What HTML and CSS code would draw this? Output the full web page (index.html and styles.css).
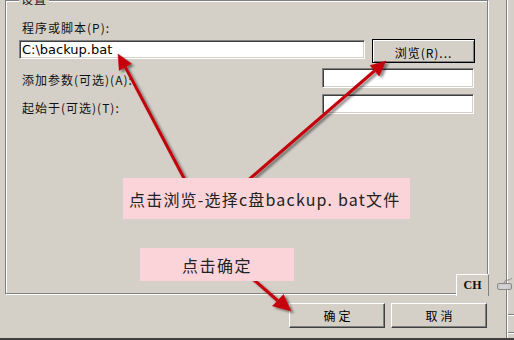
FILE: index.html
```html
<!DOCTYPE html>
<html lang="zh-CN">
<head>
<meta charset="utf-8">
<title>设置</title>
<link rel="stylesheet" href="styles.css">
</head>
<body>
<div class="window">
  <div class="main">
    <div class="group">
      <span class="group-title">设置</span>
      <div class="label first">程序或脚本(P):</div>
      <div class="row row-prog">
        <div class="field wide">C:\backup.bat</div>
        <div class="btn btn-default">浏览(R)...</div>
      </div>
      <div class="row row-opt r3">
        <div class="label">添加参数(可选)(A):</div>
        <div class="field narrow"></div>
      </div>
      <div class="row row-opt r4">
        <div class="label">起始于(可选)(T):</div>
        <div class="field narrow"></div>
      </div>
    </div>
    <div class="actions">
      <div class="btn btn-action">确定</div>
      <div class="btn btn-action">取消</div>
    </div>
  </div>
  <div class="side">
    <div class="side-line l1"></div>
    <div class="side-line l2"></div>
  </div>
</div>

<div class="langbar">CH</div>
<svg class="kbd" width="17" height="14" viewBox="0 0 17 14">
  <path d="M8 7 C8 4 10 3 12 3 C14 3 15 2 16 1" fill="none" stroke="#8c8c8c" stroke-width="1"/>
  <rect x="1.5" y="6.5" width="14" height="6" rx="1.5" fill="#c9c9c9" stroke="#8a8a8a"/>
  <path d="M3.5 9 h10 M4.5 11 h8" stroke="#f2f2f2" stroke-width="1" stroke-dasharray="1 1"/>
</svg>

<svg class="arrows" width="514" height="340" viewBox="0 0 514 340">
  <defs>
    <filter id="sh" x="-30%" y="-30%" width="160%" height="160%">
      <feDropShadow dx="2.5" dy="2" stdDeviation="1.3" flood-color="#000" flood-opacity="0.45"/>
    </filter>
  </defs>
  <g filter="url(#sh)" fill="#c4000a" stroke="#c4000a">
    <line x1="186" y1="182" x2="125.3" y2="67.1" stroke-width="3"/>
    <polygon points="118,54 131.4,63.7 119.2,70.5" stroke-width="0.5"/>
    <line x1="246" y1="182" x2="374.6" y2="70.75" stroke-width="3"/>
    <polygon points="386,61 379.15,76.07 370.05,65.43" stroke-width="0.5"/>
    <line x1="245" y1="272" x2="277.5" y2="300.5" stroke-width="3"/>
    <polygon points="291,311 283.5,294.5 272.5,306" stroke-width="0.5"/>
  </g>
</svg>

<div class="callout c1">点击浏览-选择c盘backup. bat文件</div>
<div class="callout c2">点击确定</div>
</body>
</html>
```

FILE: styles.css
```css
html, body {
  margin: 0;
  padding: 0;
}

body {
  width: 514px;
  height: 340px;
  overflow: hidden;
  position: relative;
  background: #d4d0c8;
  color: #111;
  font-family: "Noto Sans CJK SC", "Noto Sans", sans-serif;
}

.window {
  display: flex;
  height: 340px;
  box-sizing: border-box;
  border-bottom: 2px solid #404040;
}

.main {
  width: 507px;
  box-sizing: border-box;
  border-right: 1px solid #808080;
  display: flex;
  flex-direction: column;
}

.side {
  flex: 1;
  border-left: 1px solid #fff;
  display: flex;
  flex-direction: column;
}

.side-line {
  border-top: 1px solid #808080;
  border-bottom: 1px solid #fff;
}

.l1 { margin-top: 314px; }
.l2 { margin-top: 16px; }

/* group box */
.group {
  position: relative;
  margin-left: 5px;
  width: 483px;
  height: 294px;
  box-sizing: border-box;
  border: 1px solid #808080;
  box-shadow: inset 1px 1px 0 #fff, 1px 1px 0 #fff;
  padding: 20px 12px 0 13px;
}

.group-title {
  position: absolute;
  left: 13px;
  top: -9px;
  padding: 0 2px;
  background: #d4d0c8;
  font-size: 12px;
  line-height: 14px;
  letter-spacing: 1px;
}

.label {
  font-size: 12px;
  line-height: 14px;
  letter-spacing: 1px;
  padding-left: 3px;
  white-space: nowrap;
}

.row {
  display: flex;
  align-items: flex-start;
}

.row-prog {
  margin-top: 4px;
  gap: 7px;
}

.row-opt {
  justify-content: space-between;
  padding-right: 1px;
}

.r3 { margin-top: 5px; }
.r4 { margin-top: 6px; }
.r3 .label { padding-top: 5px; }
.r4 .label { padding-top: 7px; }

.field {
  background: #fff;
  box-sizing: border-box;
  border-top: 1px solid #808080;
  border-left: 1px solid #808080;
  border-bottom: 1px solid #fff;
  border-right: 1px solid #fff;
  box-shadow: inset 1px 1px 0 #404040, inset -1px -1px 0 #d4d0c8;
}

.wide {
  width: 346px;
  height: 19px;
  margin-top: 1px;
  padding-left: 2px;
  font-family: "DejaVu Sans", sans-serif;
  font-size: 13px;
  line-height: 17px;
  color: #000;
}

.narrow {
  width: 152px;
  height: 20px;
}

/* buttons */
.btn {
  box-sizing: border-box;
  display: flex;
  align-items: center;
  justify-content: center;
  background: #d4d0c8;
  color: #000;
  font-size: 12px;
  letter-spacing: 1px;
  white-space: nowrap;
}

.btn-default {
  width: 103px;
  height: 24px;
  border: 1px solid #000;
  box-shadow: inset 1px 1px 0 #fff, inset -1px -1px 0 #808080;
  padding-top: 2px;
}

.btn-action {
  width: 96px;
  height: 25px;
  border-top: 1px solid #fff;
  border-left: 1px solid #fff;
  border-right: 1px solid #404040;
  border-bottom: 1px solid #404040;
  box-shadow: inset -1px -1px 0 #808080;
  letter-spacing: 3px;
  padding-left: 3px;
}

.actions {
  display: flex;
  justify-content: flex-end;
  gap: 6px;
  margin-top: 9px;
  padding-right: 19px;
}

/* language bar overlay */
.langbar {
  position: absolute;
  left: 456px;
  top: 274px;
  width: 33px;
  height: 22px;
  box-sizing: border-box;
  border-top: 1px solid #fff;
  border-left: 1px solid #fff;
  border-right: 1px solid #808080;
  background: #d4d0c8;
  display: flex;
  align-items: center;
  justify-content: center;
  font-family: "Liberation Serif", serif;
  font-weight: bold;
  font-size: 12px;
  color: #111;
}

.kbd {
  position: absolute;
  left: 496px;
  top: 277px;
}

/* annotations */
.arrows {
  position: absolute;
  left: 0;
  top: 0;
  pointer-events: none;
}

.callout {
  position: absolute;
  box-sizing: border-box;
  background: #fad4d9;
  color: #222;
  font-size: 16px;
  display: flex;
  align-items: center;
  white-space: nowrap;
}

.c1 {
  left: 123px;
  top: 178px;
  width: 287px;
  height: 41px;
  padding-left: 6px;
  letter-spacing: 1.2px;
}

.c2 {
  left: 140px;
  top: 248px;
  width: 154px;
  height: 33px;
  justify-content: center;
  letter-spacing: 1.5px;
}
```
